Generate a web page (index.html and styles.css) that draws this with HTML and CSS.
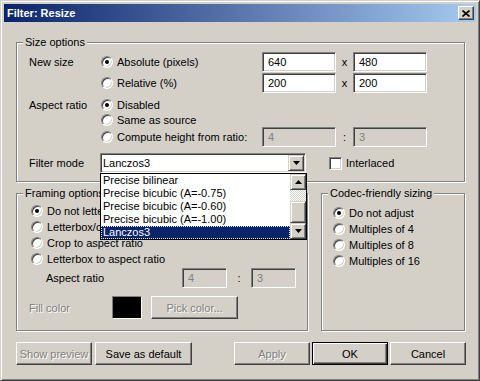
FILE: index.html
```html
<!DOCTYPE html>
<html lang="en">
<head>
    <meta charset="UTF-8">
    <title>Filter: Resize</title>
    <link rel="stylesheet" href="styles.css">
</head>
<body>
    <div class="window">
        <div class="titlebar">
            <span class="title">Filter: Resize</span>
            <span class="close">
                <svg width="8" height="7" viewBox="0 0 8 7"><path d="M0.5 0.5L7.5 6.5M7.5 0.5L0.5 6.5" stroke="#000" stroke-width="1.6"/></svg>
            </span>
        </div>
        <div class="content">
            <div class="group size-group">
                <span class="group-title">Size options</span>
                <div class="size-row first">
                    <span class="field-label">New size</span>
                    <span class="choice"><span class="radio-box checked"></span>Absolute (pixels)</span>
                    <span class="edit">640</span>
                    <span class="sep">x</span>
                    <span class="edit">480</span>
                </div>
                <div class="size-row">
                    <span class="field-label"></span>
                    <span class="choice"><span class="radio-box"></span>Relative (%)</span>
                    <span class="edit">200</span>
                    <span class="sep">x</span>
                    <span class="edit">200</span>
                </div>
                <div class="size-row short spaced">
                    <span class="field-label">Aspect ratio</span>
                    <span class="choice"><span class="radio-box checked"></span>Disabled</span>
                </div>
                <div class="size-row shorter">
                    <span class="field-label"></span>
                    <span class="choice"><span class="radio-box"></span>Same as source</span>
                </div>
                <div class="size-row">
                    <span class="field-label"></span>
                    <span class="choice"><span class="radio-box"></span>Compute height from ratio:</span>
                    <span class="edit disabled">4</span>
                    <span class="sep">:</span>
                    <span class="edit disabled">3</span>
                </div>
                <div class="size-row filter-row">
                    <span class="field-label">Filter mode</span>
                    <div class="combo">
                        <span class="combo-text">Lanczos3</span>
                        <span class="scroll-btn"><svg width="7" height="4" viewBox="0 0 7 4"><path d="M0 0h7L3.5 4z"/></svg></span>
                        <div class="dropdown">
                            <div class="items">
                                <div class="item">Precise bilinear</div>
                                <div class="item">Precise bicubic (A=-0.75)</div>
                                <div class="item">Precise bicubic (A=-0.60)</div>
                                <div class="item">Precise bicubic (A=-1.00)</div>
                                <div class="item selected">Lanczos3</div>
                            </div>
                            <div class="scrollbar">
                                <span class="scroll-btn"><svg width="7" height="4" viewBox="0 0 7 4"><path d="M0 4h7L3.5 0z"/></svg></span>
                                <span class="track"></span>
                                <span class="thumb"></span>
                                <span class="scroll-btn"><svg width="7" height="4" viewBox="0 0 7 4"><path d="M0 0h7L3.5 4z"/></svg></span>
                            </div>
                        </div>
                    </div>
                    <span class="check"><span class="check-box"></span>Interlaced</span>
                </div>
            </div>

            <div class="lower">
                <div class="group framing-group">
                    <span class="group-title">Framing options</span>
                    <span class="option"><span class="radio-box checked"></span>Do not letterbox or crop</span>
                    <span class="option"><span class="radio-box"></span>Letterbox/crop to size</span>
                    <span class="option"><span class="radio-box"></span>Crop to aspect ratio</span>
                    <span class="option"><span class="radio-box"></span>Letterbox to aspect ratio</span>
                    <div class="ratio-row">
                        <span class="ratio-label">Aspect ratio</span>
                        <span class="edit disabled small">4</span>
                        <span class="sep wide">:</span>
                        <span class="edit disabled small">3</span>
                    </div>
                    <div class="fill-row">
                        <span class="fill-label disabled-text">Fill color</span>
                        <span class="swatch"></span>
                        <span class="btn disabled pick">Pick color...</span>
                    </div>
                </div>
                <div class="group codec-group">
                    <span class="group-title">Codec-friendly sizing</span>
                    <span class="option"><span class="radio-box checked"></span>Do not adjust</span>
                    <span class="option"><span class="radio-box"></span>Multiples of 4</span>
                    <span class="option"><span class="radio-box"></span>Multiples of 8</span>
                    <span class="option"><span class="radio-box"></span>Multiples of 16</span>
                </div>
            </div>

            <div class="buttons">
                <span class="btn disabled">Show preview</span>
                <span class="btn save">Save as default</span>
                <span class="btn disabled push">Apply</span>
                <span class="btn default">OK</span>
                <span class="btn">Cancel</span>
            </div>
        </div>
    </div>
</body>
</html>
```

FILE: styles.css
```css
body {
    margin: 0;
    font-family: "Liberation Sans", Arial, sans-serif;
    font-size: 11px;
    color: #000;
    background: #d4d0c8;
}
.window {
    width: 480px;
    height: 381px;
    box-sizing: border-box;
    background: #d4d0c8;
    border: 1px solid;
    border-color: #d4d0c8 #404040 #404040 #d4d0c8;
    box-shadow: inset 1px 1px 0 #fff, inset -1px -1px 0 #808080;
    padding: 3px;
}
.titlebar {
    height: 18px;
    display: flex;
    align-items: center;
    justify-content: space-between;
    background: linear-gradient(to right, #0a246a, #a6caf0);
    padding: 0 2px 0 3px;
}
.title {
    color: #fff;
    font-weight: bold;
}
.close {
    width: 16px;
    height: 14px;
    box-sizing: border-box;
    background: #d4d0c8;
    border: 1px solid;
    border-color: #fff #404040 #404040 #fff;
    box-shadow: inset -1px -1px 0 #808080;
    display: flex;
    align-items: center;
    justify-content: center;
}
.content {
    padding: 0 10px 0 12px;
}

/* group boxes */
.group {
    border: 1px solid #808080;
    box-shadow: inset 1px 1px 0 #fff, 1px 1px 0 #fff;
    display: flex;
    flex-direction: column;
}
.group-title {
    align-self: flex-start;
    line-height: 13px;
    margin: -7px 0 3px 0;
    padding: 0 2px;
    background: #d4d0c8;
}
.size-group {
    margin: 20px 1px 0 0;
    padding: 0 0 8px 12px;
}
.size-group .group-title {
    margin-left: -6px;
}
.size-row {
    display: flex;
    align-items: center;
    height: 20px;
}
.size-row.first {
    margin-bottom: 1px;
}
.size-row.short {
    height: 16px;
}
.size-row.shorter {
    height: 14px;
}
.size-row.spaced {
    margin-top: 4px;
}
.size-row.filter-row {
    margin-top: 6px;
}
.field-label {
    width: 72px;
}
.filter-row .field-label {
    width: 71px;
}
.choice, .option, .check {
    display: flex;
    align-items: center;
    white-space: nowrap;
}
.choice {
    width: 161px;
}
.option {
    height: 16px;
}
.sep {
    width: 17px;
    text-align: center;
}
.sep.wide {
    width: 24px;
}

/* controls */
.radio-box {
    width: 12px;
    height: 12px;
    box-sizing: border-box;
    border-radius: 50%;
    background: #fff;
    border: 1px solid;
    border-color: #808080 #fff #fff #808080;
    box-shadow: inset 1px 1px 0 #404040, inset -1px -1px 0 #d4d0c8;
    margin-right: 4px;
    display: flex;
    align-items: center;
    justify-content: center;
    flex-shrink: 0;
}
.radio-box.checked::after {
    content: "";
    width: 4px;
    height: 4px;
    border-radius: 50%;
    background: #000;
}
.check {
    margin-left: 23px;
}
.check-box {
    width: 13px;
    height: 13px;
    box-sizing: border-box;
    background: #fff;
    border: 1px solid;
    border-color: #808080 #fff #fff #808080;
    box-shadow: inset 1px 1px 0 #404040, inset -1px -1px 0 #d4d0c8;
    margin-right: 4px;
}
.edit {
    box-sizing: border-box;
    width: 74px;
    height: 20px;
    display: flex;
    align-items: center;
    padding-left: 5px;
    background: #fff;
    border: 1px solid;
    border-color: #808080 #fff #fff #808080;
    box-shadow: inset 1px 1px 0 #404040, inset -1px -1px 0 #d4d0c8;
}
.edit.disabled {
    background: #d4d0c8;
    color: #808080;
}
.edit.small {
    width: 45px;
}

/* combo + open list */
.combo {
    position: relative;
    box-sizing: border-box;
    width: 206px;
    height: 20px;
    display: flex;
    padding: 1px;
    background: #fff;
    border: 1px solid;
    border-color: #808080 #fff #fff #808080;
    box-shadow: inset 1px 1px 0 #404040, inset -1px -1px 0 #d4d0c8;
}
.combo-text {
    flex: 1;
    display: flex;
    align-items: center;
    padding-left: 1px;
}
.scroll-btn {
    box-sizing: border-box;
    width: 16px;
    height: 16px;
    background: #d4d0c8;
    border: 1px solid;
    border-color: #d4d0c8 #404040 #404040 #d4d0c8;
    box-shadow: inset 1px 1px 0 #fff, inset -1px -1px 0 #808080;
    display: flex;
    align-items: center;
    justify-content: center;
    flex-shrink: 0;
}
.dropdown {
    position: absolute;
    top: 19px;
    left: -1px;
    width: 207px;
    box-sizing: border-box;
    display: flex;
    background: #fff;
    border: 1px solid #000;
    z-index: 2;
}
.items {
    flex: 1;
}
.item {
    height: 13px;
    line-height: 13px;
    padding-left: 2px;
    white-space: nowrap;
}
.item.selected {
    background: #0a246a;
    color: #fff;
    outline: 1px dotted #e8e8e8;
    outline-offset: -1px;
}
.scrollbar {
    width: 16px;
    display: flex;
    flex-direction: column;
}
.track {
    height: 11px;
    background: repeating-conic-gradient(#fff 0 25%, #d4d0c8 0 50%) 0 0 / 2px 2px;
}
.thumb {
    flex: 1;
    box-sizing: border-box;
    background: #d4d0c8;
    border: 1px solid;
    border-color: #d4d0c8 #404040 #404040 #d4d0c8;
    box-shadow: inset 1px 1px 0 #fff, inset -1px -1px 0 #808080;
}

/* lower groups */
.lower {
    display: flex;
    margin: 11px 1px 0 0;
}
.framing-group {
    width: 292px;
    box-sizing: border-box;
    padding: 0 0 11px 14px;
}
.framing-group .group-title {
    margin-left: -8px;
}
.codec-group {
    flex: 1;
    margin-left: 13px;
    padding-left: 11px;
}
.codec-group .group-title {
    margin: -7px 0 5px -5px;
}
.ratio-row {
    display: flex;
    align-items: center;
    height: 20px;
    margin-top: 1px;
}
.ratio-label {
    width: 136px;
    margin-left: 15px;
}
.fill-row {
    display: flex;
    align-items: center;
    height: 23px;
    margin: 8px 0 0 -2px;
}
.fill-label {
    width: 83px;
}
.disabled-text {
    color: #808080;
    text-shadow: 1px 1px 0 #fff;
}
.swatch {
    box-sizing: border-box;
    width: 30px;
    height: 23px;
    background: #000;
    border: 1px solid;
    border-color: #808080 #fff #fff #808080;
}

/* buttons */
.btn {
    box-sizing: border-box;
    width: 76px;
    height: 23px;
    display: flex;
    align-items: center;
    justify-content: center;
    background: #d4d0c8;
    border: 1px solid;
    border-color: #fff #404040 #404040 #fff;
    box-shadow: inset -1px -1px 0 #808080;
    white-space: nowrap;
}
.btn.disabled {
    color: #808080;
    text-shadow: 1px 1px 0 #fff;
}
.btn.default {
    border-color: #000;
    box-shadow: inset 1px 1px 0 #fff, inset -1px -1px 0 #404040, inset -2px -2px 0 #808080;
}
.btn.pick {
    width: 87px;
    margin-left: 9px;
}
.buttons {
    display: flex;
    gap: 2px;
    margin-top: 11px;
}
.btn.save {
    width: 97px;
    margin-left: 1px;
}
.btn.push {
    margin-left: auto;
}
```
